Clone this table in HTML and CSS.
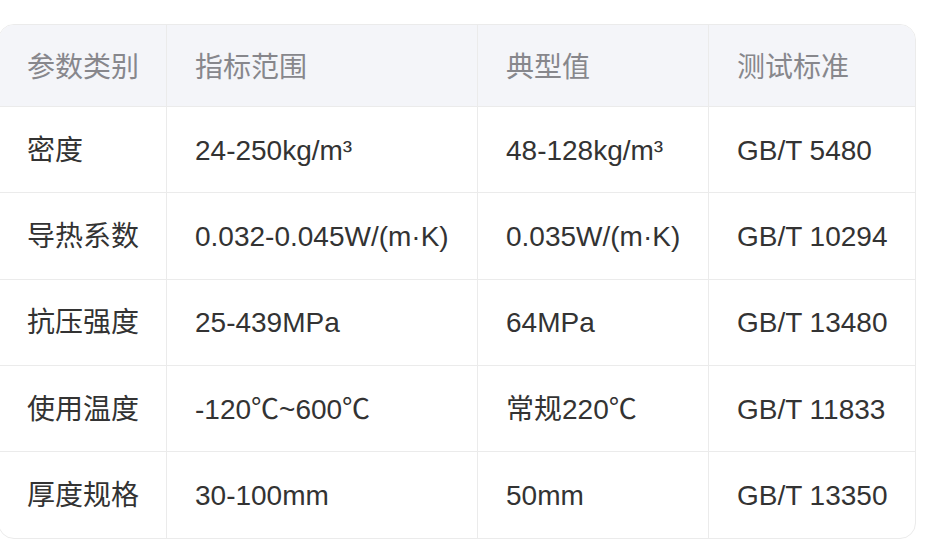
FILE: index.html
```html
<!DOCTYPE html>
<html lang="zh-CN">
<head>
<meta charset="utf-8">
<title>参数表</title>
<link rel="stylesheet" href="styles.css">
</head>
<body>
<div class="table-wrap">
  <table class="spec-table">
    <colgroup>
      <col class="c1"><col class="c2"><col class="c3"><col class="c4">
    </colgroup>
    <thead>
      <tr><th>参数类别</th><th>指标范围</th><th>典型值</th><th>测试标准</th></tr>
    </thead>
    <tbody>
      <tr><td>密度</td><td>24-250kg/m³</td><td>48-128kg/m³</td><td>GB/T 5480</td></tr>
      <tr><td>导热系数</td><td>0.032-0.045W/(m·K)</td><td>0.035W/(m·K)</td><td>GB/T 10294</td></tr>
      <tr><td>抗压强度</td><td>25-439MPa</td><td>64MPa</td><td>GB/T 13480</td></tr>
      <tr><td>使用温度</td><td>-120℃~600℃</td><td>常规220℃</td><td>GB/T 11833</td></tr>
      <tr><td>厚度规格</td><td>30-100mm</td><td>50mm</td><td>GB/T 13350</td></tr>
    </tbody>
  </table>
</div>
</body>
</html>
```

FILE: styles.css
```css
html, body {
  margin: 0;
  padding: 0;
  background: #ffffff;
}
body {
  font-family: "Liberation Sans", "Noto Sans CJK SC", sans-serif;
  color: #333333;
}
.table-wrap {
  margin: 24px 0 0 -2px;
  width: 918px;
  box-sizing: border-box;
  border: 1px solid #ebebeb;
  border-radius: 16px;
  overflow: hidden;
}
.spec-table {
  width: 916px;
  border-collapse: separate;
  border-spacing: 0;
  table-layout: fixed;
  font-size: 28px;
}
.c1 { width: 168px; }
.c2 { width: 311px; }
.c3 { width: 231px; }
.c4 { width: 206px; }
.spec-table th,
.spec-table td {
  text-align: left;
  padding: 0 28px;
  line-height: 42px;
  border-right: 1px solid #ebebeb;
  border-bottom: 1px solid #ebebeb;
  white-space: nowrap;
  box-sizing: border-box;
}
.spec-table th:last-child,
.spec-table td:last-child {
  border-right: none;
}
.spec-table tbody tr:last-child td {
  border-bottom: none;
}
.spec-table th {
  font-weight: normal;
  color: #87878c;
  background: #f4f5f9;
  height: 82px;
  padding-top: 4px;
  padding-bottom: 0;
}
.spec-table td {
  height: 86.3px;
  padding-top: 2px;
  padding-bottom: 0;
  color: #333333;
}
```
